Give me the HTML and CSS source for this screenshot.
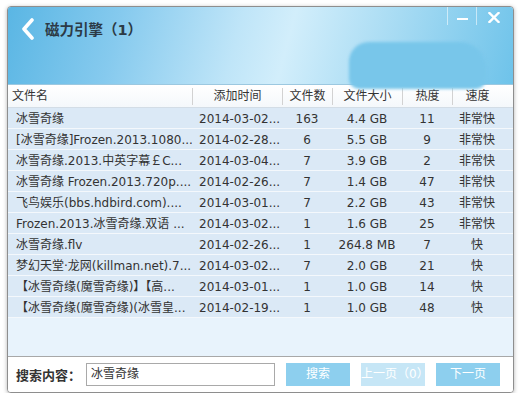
FILE: index.html
```html
<!DOCTYPE html>
<html>
<head>
<meta charset="utf-8">
<link rel="stylesheet" href="styles.css">
</head>
<body>
<div class="win">
  <div class="titlebar">
    <svg class="back" width="14" height="22" viewBox="0 0 14 22"><polyline points="11,2 3,11 11,20" fill="none" stroke="#fff" stroke-width="3.6" stroke-linecap="round" stroke-linejoin="round"/></svg>
    <div class="title">磁力引擎（1）</div>
    <div class="controls">
      <div class="ctl"><span class="min"></span></div>
      <div class="ctl close"><svg width="12" height="11" viewBox="0 0 12 11"><path d="M1.5 1 L10.5 10 M10.5 1 L1.5 10" stroke="#fff" stroke-width="2.4" stroke-linecap="square"/></svg></div>
    </div>
    <div class="blob"></div>
  </div>
  <div class="thead">
    <div class="c name">文件名</div>
    <div class="c sep">添加时间</div>
    <div class="c sep">文件数</div>
    <div class="c sep">文件大小</div>
    <div class="c sep">热度</div>
    <div class="c sep">速度</div>
  </div>
  <div class="tbody">
    <div class="row"><div class="c name">冰雪奇缘</div><div class="c date">2014-03-02...</div><div class="c">163</div><div class="c">4.4 GB</div><div class="c">11</div><div class="c">非常快</div></div>
    <div class="row"><div class="c name">[冰雪奇缘]Frozen.2013.1080...</div><div class="c date">2014-02-28...</div><div class="c">6</div><div class="c">5.5 GB</div><div class="c">9</div><div class="c">非常快</div></div>
    <div class="row"><div class="c name">冰雪奇缘.2013.中英字幕￡C...</div><div class="c date">2014-03-04...</div><div class="c">7</div><div class="c">3.9 GB</div><div class="c">2</div><div class="c">非常快</div></div>
    <div class="row"><div class="c name">冰雪奇缘 Frozen.2013.720p....</div><div class="c date">2014-02-26...</div><div class="c">7</div><div class="c">1.4 GB</div><div class="c">47</div><div class="c">非常快</div></div>
    <div class="row"><div class="c name">飞鸟娱乐(bbs.hdbird.com)....</div><div class="c date">2014-03-01...</div><div class="c">7</div><div class="c">2.2 GB</div><div class="c">43</div><div class="c">非常快</div></div>
    <div class="row"><div class="c name">Frozen.2013.冰雪奇缘.双语 ...</div><div class="c date">2014-03-02...</div><div class="c">1</div><div class="c">1.6 GB</div><div class="c">25</div><div class="c">非常快</div></div>
    <div class="row"><div class="c name">冰雪奇缘.flv</div><div class="c date">2014-02-26...</div><div class="c">1</div><div class="c">264.8 MB</div><div class="c">7</div><div class="c">快</div></div>
    <div class="row"><div class="c name">梦幻天堂·龙网(killman.net).7...</div><div class="c date">2014-03-02...</div><div class="c">7</div><div class="c">2.0 GB</div><div class="c">21</div><div class="c">快</div></div>
    <div class="row"><div class="c name">【冰雪奇缘(魔雪奇缘)】【高...</div><div class="c date">2014-03-01...</div><div class="c">1</div><div class="c">1.0 GB</div><div class="c">14</div><div class="c">快</div></div>
    <div class="row"><div class="c name">【冰雪奇缘(魔雪奇缘)(冰雪皇...</div><div class="c date">2014-02-19...</div><div class="c">1</div><div class="c">1.0 GB</div><div class="c">48</div><div class="c">快</div></div>
  </div>
  <div class="empty"></div>
  <div class="footer">
    <span class="label">搜索内容：</span>
    <div class="input">冰雪奇缘</div>
    <div class="btn">搜索</div>
    <div class="btn disabled">上一页（0）</div>
    <div class="btn">下一页</div>
  </div>
</div>
</body>
</html>
```

FILE: styles.css
```css
* { box-sizing: border-box; }
html, body { margin: 0; padding: 0; background: #ffffff; }
body {
  font-family: "DejaVu Sans", "Noto Sans CJK SC", sans-serif;
  font-size: 12px;
  color: #333;
}
.win {
  margin: 6px 0 0 7px;
  width: 507px;
  height: 387px;
  border: 1px solid #8e8e8e;
  border-radius: 4px;
  box-shadow: 0 1px 4px rgba(0,0,0,0.3);
  display: flex;
  flex-direction: column;
  overflow: hidden;
  background: #fff;
}
.titlebar {
  position: relative;
  z-index: 1;
  height: 78px;
  flex: none;
  display: flex;
  align-items: flex-start;
  padding: 10px 0 0 13px;
  background: linear-gradient(105deg, #5ab6e4 0%, #86caee 22%, #bfe5f8 45%, #d2eefb 55%, #a7dbf3 75%, #6ec3ea 100%);
  border-bottom: 1px solid #9cc8e0;
}
.back { display: block; margin-top: 1px; }
.title {
  margin-left: 10px;
  margin-top: 3px;
  font-size: 14.5px;
  font-weight: bold;
  color: #2c3a46;
  line-height: 20px;
}
.controls {
  margin-left: auto;
  margin-right: 8px;
  margin-top: -10px;
  display: flex;
  position: relative;
  z-index: 2;
}
.ctl {
  width: 29px;
  height: 18px;
  border-left: 1px solid rgba(255,255,255,0.55);
  display: flex;
  align-items: center;
  justify-content: center;
  padding-top: 3px;
}
.ctl.close { padding-left: 6px; }
.min { display: block; width: 11px; height: 2px; background: #fff; margin-top: 2px; }
.blob {
  position: absolute;
  left: 341px;
  top: 35px;
  width: 137px;
  height: 47px;
  border-radius: 20px 26px 10px 10px;
  background: #78c6ea;
  filter: blur(1.5px);
}
.thead {
  flex: none;
  height: 23px;
  display: grid;
  grid-template-columns: 184px 90px 50px 70px 50px 50px 1fr;
  padding: 3px 0;
  background: linear-gradient(#ffffff, #f4f8fb);
  border-bottom: 1px solid #d3dde6;
  line-height: 17px;
}
.thead .c { text-align: center; }
.thead .name { text-align: left; padding-left: 4px; }
.thead .sep { border-left: 1px solid #d2d2d2; }
.tbody { flex: none; }
.row {
  height: 21px;
  display: grid;
  grid-template-columns: 184px 90px 50px 70px 50px 50px 1fr;
  background: #dbe9f6;
  border-bottom: 1px solid #f4f8fc;
}
.row .c {
  text-align: center;
  white-space: nowrap;
  overflow: hidden;
  padding-top: 2px;
  line-height: 18px;
}
.row .name { text-align: left; padding-left: 8px; }
.row .date { text-align: left; padding-left: 7px; }
.empty { flex: 1; background: #e8f3fc; }
.footer {
  flex: none;
  height: 36px;
  border-top: 1px solid #a8a8a8;
  display: flex;
  align-items: center;
  padding: 0 0 0 8px;
  background: #fff;
}
.label { font-weight: bold; font-size: 13px; color: #333; width: 70px; }
.input {
  width: 189px;
  height: 23px;
  border: 1px solid #a9a9a9;
  padding-left: 4px;
  line-height: 21px;
  font-size: 12px;
}
.btn {
  width: 64px;
  height: 23px;
  margin-left: 11px;
  background: #8dcfee;
  color: #fff;
  text-align: center;
  line-height: 23px;
  font-size: 12px;
}
.btn.disabled { background: #c6e6f6; }
```
